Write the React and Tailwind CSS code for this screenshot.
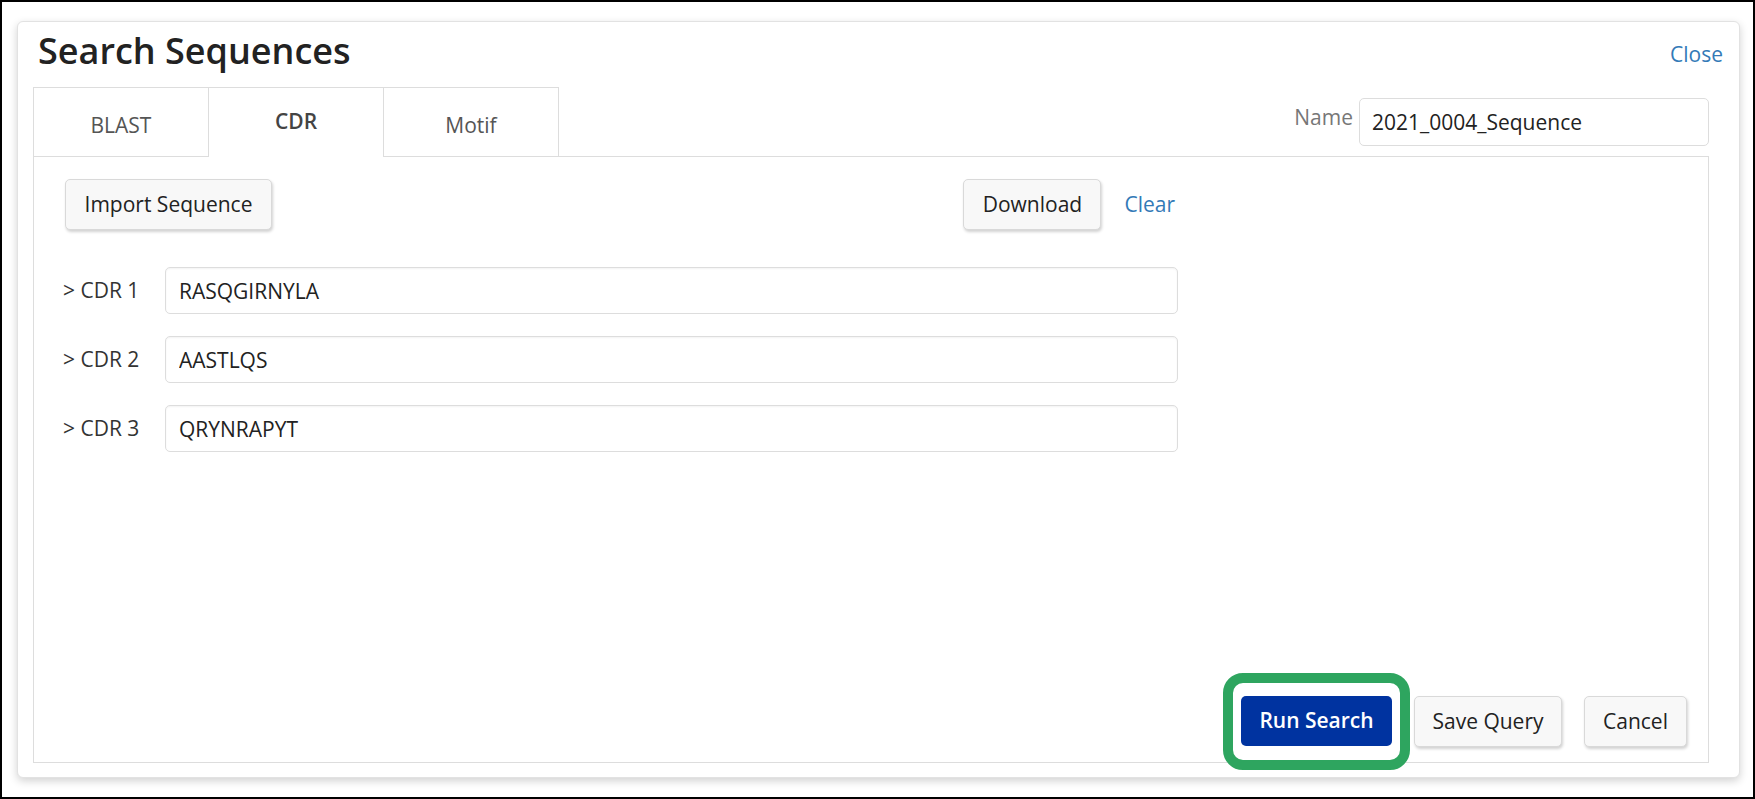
import React from 'react';

// Search Sequences dialog (CDR tab)
const btn =
  'flex items-center justify-center h-[51px] rounded-[5px] border border-[#d9d9d9] bg-[#f8f8f8] text-[21px] text-[#222] shadow-[1px_2px_3px_rgba(0,0,0,0.18)]';

const cdrs = [
  { label: '> CDR 1', value: 'RASQGIRNYLA' },
  { label: '> CDR 2', value: 'AASTLQS' },
  { label: '> CDR 3', value: 'QRYNRAPYT' },
];

function Tab({ label, active }) {
  if (active) {
    return (
      <div className="-ml-px w-[176px] h-[70px] border border-b-0 border-[#ddd] bg-white flex items-center justify-center pb-[2px] text-[21px] font-semibold text-[#444]">
        {label}
      </div>
    );
  }
  return (
    <div className="-ml-px first:ml-0 w-[176px] h-[70px] border border-[#ddd] bg-white flex items-center justify-center pt-[8px] text-[21px] text-[#555]">
      {label}
    </div>
  );
}

export default function App() {
  return (
    <div className="w-[1755px] h-[799px] border-2 border-black bg-white pt-[19px] pl-[15px] pr-[13px] pb-[19px] flex font-['Open_Sans',sans-serif]">
      {/* Card */}
      <div className="flex-1 flex flex-col rounded-[6px] border border-[#e2e2e2] bg-white shadow-[0_3px_8px_rgba(0,0,0,0.18)] pl-[15px] pr-[16px] pb-[14px]">
        {/* Header */}
        <div className="flex items-center justify-between pt-[5px] h-[52px]">
          <h1 className="ml-[5px] text-[36px] leading-[47px] font-semibold text-[#222]">Search Sequences</h1>
          <a className="mt-[8px] text-[21px] text-[#337ab7] cursor-pointer">Close</a>
        </div>

        <div className="flex-1 flex flex-col mr-[14px] mt-[13px]">
          {/* Tabs + name */}
          <div className="flex">
            <Tab label="BLAST" />
            <Tab label="CDR" active />
            <Tab label="Motif" />
            <div className="flex-1 h-[70px] border-b border-[#ddd] flex items-center justify-end gap-[6px]">
              <span className="mb-[8px] text-[21px] text-[#777]">Name</span>
              <input
                defaultValue="2021_0004_Sequence"
                className="w-[350px] h-[48px] rounded-[5px] border border-[#ddd] pl-[12px] text-[21px] text-[#222] outline-none"
              />
            </div>
          </div>

          {/* Panel */}
          <div className="flex-1 flex flex-col border border-t-0 border-[#ddd] pl-[31px] pr-[21px] pt-[22px] pb-[15px]">
            <div className="w-[1113px]">
              <div className="flex items-center justify-between">
                <button className={`${btn} w-[207px]`}>Import Sequence</button>
                <div className="flex items-center gap-[23px]">
                  <button className={`${btn} w-[138px]`}>Download</button>
                  <a className="pr-[3px] text-[21px] text-[#337ab7] cursor-pointer">Clear</a>
                </div>
              </div>

              <div className="mt-[37px] flex flex-col gap-[22px]">
                {cdrs.map((c) => (
                  <div key={c.label} className="flex items-center">
                    <span className="-ml-[2px] w-[102px] text-[21px] text-[#333]">{c.label}</span>
                    <input
                      defaultValue={c.value}
                      className="flex-1 h-[47px] rounded-[5px] border border-[#ddd] pl-[13px] text-[21px] text-[#222] outline-none shadow-[inset_0_1px_2px_rgba(0,0,0,0.05)]"
                    />
                  </div>
                ))}
              </div>
            </div>

            {/* Footer buttons */}
            <div className="mt-auto flex justify-end gap-[22px]">
              <div className="relative">
                <div className="absolute -left-[18px] -right-[18px] -top-[23px] -bottom-[23px] border-[10px] border-[#2ea55f] rounded-[20px]" />
                <button className="relative w-[151px] h-[50px] rounded-[5px] bg-[#0033a0] text-[21px] font-semibold text-white">
                  Run Search
                </button>
              </div>
              <button className={`${btn} w-[148px] h-[50px]`}>Save Query</button>
              <button className={`${btn} w-[103px] h-[50px]`}>Cancel</button>
            </div>
          </div>
        </div>
      </div>
    </div>
  );
}
